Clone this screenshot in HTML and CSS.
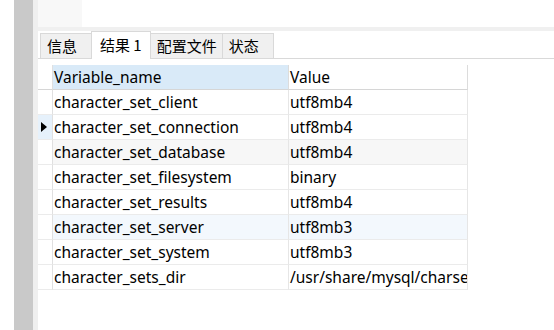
FILE: index.html
```html
<!DOCTYPE html>
<html>
<head>
<meta charset="utf-8">
<link rel="stylesheet" href="styles.css">
</head>
<body>
<div class="app">
  <div class="gutter">
    <div class="g-white"></div>
    <div class="g-dark"></div>
    <div class="g-light"></div>
  </div>
  <div class="main">
    <div class="top"><div class="top-cell"></div></div>
    <div class="band"></div>
    <div class="tabs">
      <div class="tab">信息</div>
      <div class="tab active">结果 1</div>
      <div class="tab">配置文件</div>
      <div class="tab">状态</div>
    </div>
    <div class="grid">
      <div class="cell rh head"></div>
      <div class="cell head sel">Variable_name</div>
      <div class="cell head">Value</div>

      <div class="cell rh"></div>
      <div class="cell">character_set_client</div>
      <div class="cell">utf8mb4</div>

      <div class="cell rh cur"><span class="arrow"></span></div>
      <div class="cell">character_set_connection</div>
      <div class="cell">utf8mb4</div>

      <div class="cell rh"></div>
      <div class="cell gray">character_set_database</div>
      <div class="cell gray">utf8mb4</div>

      <div class="cell rh"></div>
      <div class="cell">character_set_filesystem</div>
      <div class="cell">binary</div>

      <div class="cell rh"></div>
      <div class="cell">character_set_results</div>
      <div class="cell">utf8mb4</div>

      <div class="cell rh"></div>
      <div class="cell blue">character_set_server</div>
      <div class="cell blue">utf8mb3</div>

      <div class="cell rh"></div>
      <div class="cell">character_set_system</div>
      <div class="cell">utf8mb3</div>

      <div class="cell rh"></div>
      <div class="cell">character_sets_dir</div>
      <div class="cell">/usr/share/mysql/charsets/</div>
    </div>
  </div>
</div>
</body>
</html>
```

FILE: styles.css
```css
html, body {
  margin: 0;
  padding: 0;
  background: #ffffff;
}
body {
  font-family: "Noto Sans", "Noto Sans CJK SC", sans-serif;
  font-size: 15.5px;
  color: #000;
}
.app {
  display: flex;
  height: 330px;
  overflow: hidden;
}
.gutter {
  display: flex;
  flex: none;
}
.g-white { width: 14px; background: #ffffff; }
.g-dark { width: 19px; background: #c9c9c9; }
.g-light { width: 5px; background: #efefef; }
.main {
  flex: 1;
  display: flex;
  flex-direction: column;
  min-width: 0;
}
.top {
  height: 27px;
  display: flex;
}
.top-cell {
  width: 44px;
  background: #f8f8f8;
}
.band {
  height: 4px;
  background: #f0f0f0;
}
.tabs {
  height: 27px;
  border-bottom: 1px solid #d9d9d9;
  display: flex;
  align-items: flex-end;
  padding-left: 2px;
}
.tab {
  box-sizing: border-box;
  height: 25px;
  min-width: 52px;
  padding: 0 5px 0 6px;
  border: 1px solid #d9d9d9;
  border-bottom: none;
  background: #f0f0f0;
  font-family: "Noto Sans CJK SC", sans-serif;
  font-size: 15px;
  line-height: 23px;
  margin-right: -1px;
  white-space: nowrap;
}
.tab.active {
  height: 28px;
  margin-bottom: -1px;
  background: #ffffff;
  line-height: 25px;
  padding: 0 8px;
  position: relative;
  z-index: 1;
}
.grid {
  margin-top: 6px;
  display: grid;
  grid-template-columns: 15px 236px 179px;
  grid-auto-rows: 25px;
  width: 430px;
}
.cell {
  box-sizing: border-box;
  border-right: 1px solid #e6e6e6;
  border-bottom: 1px solid #ebebeb;
  padding-left: 1px;
  line-height: 24px;
  white-space: nowrap;
  overflow: hidden;
}
.cell.head {
  border-bottom-color: #d6d6d6;
  border-right-color: #dcdcdc;
}
.cell.sel {
  background: #d9eaf8;
}
.cell.rh {
  padding: 0;
  border-right-color: #e0e0e0;
  display: flex;
  align-items: center;
}
.cell.cur {
  background: #e6f1fb;
}
.cell.gray { background: #f7f7f7; }
.cell.blue { background: #f3f8fd; }
.arrow {
  width: 0;
  height: 0;
  margin-left: 3px;
  border-top: 5px solid transparent;
  border-bottom: 5px solid transparent;
  border-left: 6px solid #000;
}
```
